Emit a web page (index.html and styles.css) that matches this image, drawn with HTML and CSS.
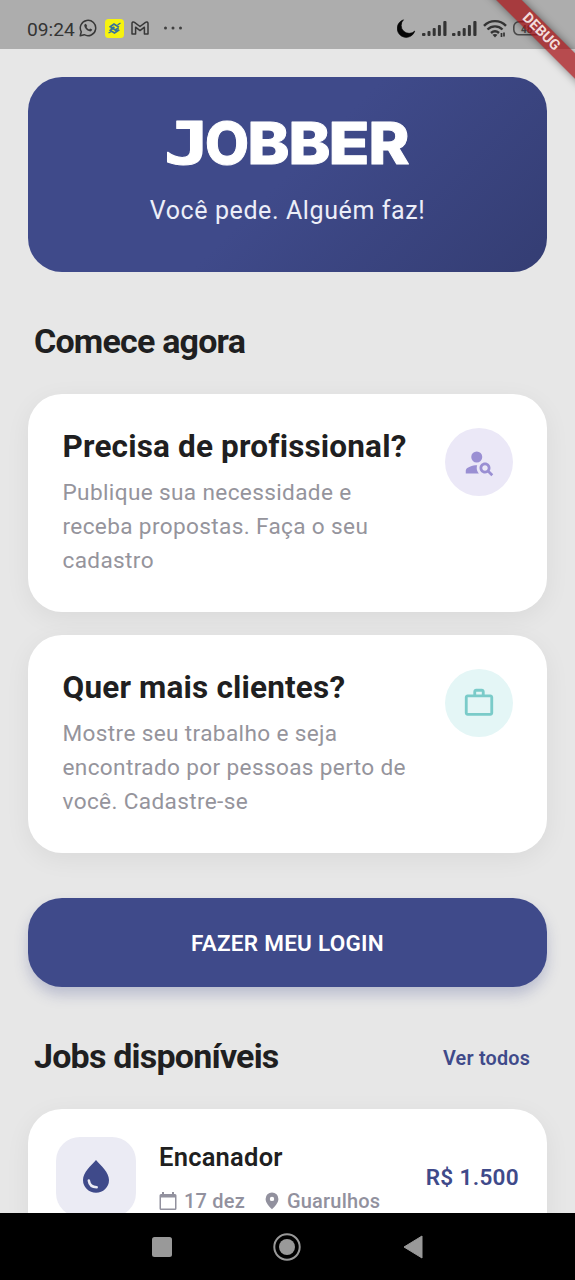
FILE: index.html
```
<!DOCTYPE html>
<html lang="pt-BR">
<head>
<meta charset="utf-8">
<title>Jobber</title>
<link rel="stylesheet" href="styles.css">
</head>
<body>
<div class="screen">
  <header class="status">
    <div class="status-left">
      <span class="clock">09:24</span>
      <svg class="i-wa" width="18" height="18" viewBox="0 0 18 18" fill="none" stroke="#383838" stroke-width="1.5"><path d="M1.2 16.8l1.1-4A7.7 7.7 0 1 1 5.2 15.700z" stroke-linejoin="round"/><path d="M5.700 5.200l1.200-.5 1.300 2.200-.7 1.200c.7 1.200 1.400 1.800 2.600 2.300l1-.9 2.100 1.100c-.2 1.500-1.500 2-2.700 1.700C7.700 11.500 5.400 8.900 5.200 6.500z" fill="#383838" stroke="none"/></svg>
      <svg class="i-bb" width="19" height="19" viewBox="0 0 19 19"><rect width="19" height="19" rx="3.500" fill="#f6f30f"/><g fill="none" stroke="#37709b" stroke-width="1.700"><path d="M4.500 8.200L9 5l5 3.200M4.500 11L9.500 14l4.800-3.200"/><path d="M6 8l6.500 4.500M5.500 10.800l4-2.600M9.500 11.500l4-2.500" stroke-width="2"/><path d="M3.500 14l3-1.500M12.500 6l3-2" stroke-width="1.300"/></g></svg>
      <svg class="i-gm" width="18" height="14" viewBox="0 0 18 14" fill="none" stroke="#383838" stroke-width="1.500" stroke-linejoin="round"><path d="M1 13V2.300C1 .9 2.500.6 3.500 1.300L9 5.500l5.500-4.200C15.500.6 17 .9 17 2.300V13h-3.600V6.200L9 9.600 4.600 6.200V13z"/></svg>
      <svg class="i-dots" width="20" height="4" viewBox="0 0 20 4" fill="#404040"><circle cx="2.500" cy="2" r="1.500"/><circle cx="10" cy="2" r="1.500"/><circle cx="17.500" cy="2" r="1.500"/></svg>
    </div>
    <div class="status-right">
      <svg width="19" height="19" viewBox="0 0 19 19"><path d="M6.500 .8A9 9 0 1 0 17.800 12 7.400 7.400 0 0 1 6.500 .8z" fill="#050505" stroke="#050505" stroke-width=".6" stroke-linejoin="round"/></svg>
      <svg class="i-sig" width="25" height="17" viewBox="0 0 25 17" fill="#343434"><rect y="13" width="3.500" height="3" rx="1"/><rect x="5.500" y="11" width="3" height="5" rx="1"/><rect x="10.700" y="8" width="3" height="8" rx="1"/><rect x="15.900" y="5" width="3" height="11" rx="1"/><rect x="21.300" y="1" width="3.200" height="15" rx="1"/></svg>
      <svg class="i-sig" width="25" height="17" viewBox="0 0 25 17" fill="#343434"><rect y="13" width="3.500" height="3" rx="1"/><rect x="5.500" y="11" width="3" height="5" rx="1"/><rect x="10.700" y="8" width="3" height="8" rx="1"/><rect x="15.900" y="5" width="3" height="11" rx="1"/><rect x="21.300" y="1" width="3.200" height="15" rx="1"/></svg>
      <svg class="i-wifi" width="24" height="19" viewBox="0 0 24 19" fill="none" stroke="#343434" stroke-width="2.400"><path d="M1 6.800c6-6.300 16-6.300 22 0M4.500 10.500c4.300-4.200 10.700-4.200 15 0M8 14c2.500-2.300 5.500-2.300 8 0"/><path d="M9.500 15.800l2.500 2.700 2.500-2.700c-1.500-1.200-3.500-1.200-5 0z" fill="#343434" stroke="none"/><path d="M18.500 18v-4M21 13.500v4" stroke-width="1.700"/></svg>
      <svg class="i-bat" width="34" height="15" viewBox="0 0 34 15"><rect x=".8" y=".8" width="28.500" height="13" rx="5" fill="none" stroke="#4b4b4b" stroke-width="1.600"/><path d="M31 5c1.500 1 1.500 3.500 0 4.500z" fill="#4b4b4b"/><text x="8" y="11.500" class="bat-text">48</text></svg>
    </div>
  </header>

  <main class="content">
    <section class="hero">
      <svg class="logo" width="244" height="50" viewBox="0 0 244 50" role="img" aria-label="JOBBER"><text y="45"><tspan class="logo-j" x="-2.500" textLength="47" lengthAdjust="spacingAndGlyphs">J</tspan><tspan x="39" textLength="44" lengthAdjust="spacingAndGlyphs">O</tspan><tspan x="81.500" textLength="42" lengthAdjust="spacingAndGlyphs">B</tspan><tspan x="122.500" textLength="42" lengthAdjust="spacingAndGlyphs">B</tspan><tspan x="162.500" textLength="41" lengthAdjust="spacingAndGlyphs">E</tspan><tspan x="202.500" textLength="41" lengthAdjust="spacingAndGlyphs">R</tspan></text></svg>
      <p class="tagline">Você pede. Alguém faz!</p>
    </section>

    <h2 class="heading start">Comece agora</h2>

    <section class="card option">
      <div class="option-text">
        <h3>Precisa de profissional?</h3>
        <p>Publique sua necessidade e<br>receba propostas. Faça o seu<br>cadastro</p>
      </div>
      <div class="bubble lilac"><svg width="33" height="33" viewBox="0 0 24 24" fill="#9a8fd3"><circle cx="10" cy="8" r="4"/><path d="M10.350 14.010C7.620 13.910 2 15.270 2 18v2h9.540c-2.470-2.760-1.230-5.890-1.190-5.990z"/><path d="M19.430 18.020c.36-.59.57-1.280.57-2.020 0-2.210-1.790-4-4-4s-4 1.790-4 4 1.790 4 4 4c.74 0 1.430-.22 2.020-.57L20.590 22 22 20.590l-2.570-2.570zM16 18c-1.100 0-2-.9-2-2s.9-2 2-2 2 .9 2 2-.9 2-2 2z"/></svg></div>
    </section>

    <section class="card option second">
      <div class="option-text">
        <h3>Quer mais clientes?</h3>
        <p>Mostre seu trabalho e seja<br>encontrado por pessoas perto de<br>você. Cadastre-se</p>
      </div>
      <div class="bubble mint"><svg width="34" height="34" viewBox="0 0 24 24" fill="#7acbc9"><path fill-rule="evenodd" d="M14 6V4h-4v2h4zM4 8v11h16V8H4zm16-2c1.110 0 2 .89 2 2v11c0 1.110-.89 2-2 2H4c-1.110 0-2-.89-2-2l.010-11c0-1.110.88-2 1.990-2h4V4c0-1.110.89-2 2-2h4c1.110 0 2 .89 2 2v2h4z"/></svg></div>
    </section>

    <button class="login">FAZER MEU LOGIN</button>

    <div class="jobs-head">
      <h2 class="heading">Jobs disponíveis</h2>
      <a class="all">Ver todos</a>
    </div>

    <section class="card job">
      <div class="tile"><svg width="34" height="40" viewBox="0 0 34 40"><path d="M17 3C12 8.500 4 15.500 4 23a13 12.700 0 0 0 26 0C30 15.500 22 8.500 17 3z" fill="#3f4a8a"/><path d="M9.800 23.500c.6 4.300 3.500 6.700 7.900 6.700" fill="none" stroke="#ebebf4" stroke-width="2.500" stroke-linecap="round"/></svg></div>
      <div class="job-info">
        <h4>Encanador</h4>
        <div class="meta">
          <svg width="18" height="20" viewBox="0 0 18 20" fill="#92919e"><path fill-rule="evenodd" d="M3 1h2v2h8V1h2v2h1a1.500 1.500 0 0 1 1.500 1.500v13A1.500 1.500 0 0 1 16 19H2A1.500 1.500 0 0 1 .5 17.500v-13A1.500 1.500 0 0 1 2 3h1zm-1 5.500v11h14V6.500z"/></svg>
          <span class="date">17 dez</span>
          <svg width="14" height="18" viewBox="0 0 14 18"><path fill="#92919e" fill-rule="evenodd" d="M7 .5a6.400 6.400 0 0 0-6.400 6.400C.6 11 4.500 14.500 7 17.200c2.500-2.700 6.400-6.200 6.400-10.300A6.400 6.400 0 0 0 7 .5zm0 4.200a2.200 2.200 0 1 1 0 4.400 2.200 2.200 0 0 1 0-4.400z"/></svg>
          <span class="city">Guarulhos</span>
        </div>
      </div>
      <strong class="price">R$ 1.500</strong>
    </section>
  </main>

  <nav class="nav">
    <svg width="22" height="22" viewBox="0 0 22 22"><rect x="1" y="1" width="20" height="20" rx="2.500" fill="#999"/></svg>
    <svg width="28" height="28" viewBox="0 0 28 28"><circle cx="14" cy="14" r="12.700" fill="none" stroke="#999" stroke-width="2"/><circle cx="14" cy="14" r="8" fill="#999"/></svg>
    <svg width="22" height="26" viewBox="0 0 22 26"><path d="M20 2v22L2 13z" fill="#999" stroke="#999" stroke-linejoin="round"/></svg>
  </nav>

  <div class="banner-box"><div class="banner">DEBUG</div></div>
</div>
</body>
</html>
```
FILE: styles.css
```
* { box-sizing: border-box; }
body { margin: 0; font-family: Roboto, "Liberation Sans", sans-serif; background: #e7e7e7; }
h2, h3, h4, p { margin: 0; }
svg { display: block; flex: none; }
.screen { position: relative; width: 575px; height: 1280px; overflow: hidden; display: flex; flex-direction: column; background: #e7e7e7; }
.status { flex: none; height: 49px; padding: 7px 27px 0; display: flex; justify-content: space-between; background: #adadad; }
.status-left, .status-right { display: flex; align-items: center; height: 42px; white-space: nowrap; }
.clock { width: 52px; padding-top: 2px; font-size: 19.2px; color: #343434; }
.i-bb { margin-left: 8px; }
.i-gm { margin-left: 7px; }
.i-dots { margin-left: 14px; }
.status-right { margin-right: 1px; gap: 6px; }
.i-sig + .i-sig { margin-left: -1px; }
.bat-text { font: 700 10px Roboto, sans-serif; fill: #4b4b4b; }

.content { flex: 1; min-height: 0; overflow: hidden; padding: 28px 28px 0; display: flex; flex-direction: column; }
.content > * { flex: none; }
.hero { height: 195px; border-radius: 34px; background: linear-gradient(135deg, #3f4a8a 0%, #3f4a8a 50%, #343d73 100%); display: flex; flex-direction: column; align-items: center; padding-top: 42px; }
.logo { overflow: visible; }
.logo text { font: 800 58px Inter, sans-serif; fill: #fff; stroke: #fff; stroke-width: 1; stroke-linejoin: round; }
.logo .logo-j { font-family: "DejaVu Sans Mono", monospace; font-weight: 700; }
.tagline { margin-top: 24px; font-size: 25px; line-height: 36px; letter-spacing: .6px; color: #eceef8; }
.heading { font-size: 34px; line-height: 44px; font-weight: 700; letter-spacing: -.8px; color: #1f1f21; }
.start { margin: 47px 0 31px 6px; }
.card { background: #fff; border-radius: 34px; box-shadow: 0 6px 26px rgba(0, 0, 0, .06); }
.option { height: 218px; padding: 34px 34px 0 34.500px; display: flex; justify-content: space-between; }
.second { margin-top: 23px; }
.option-text { white-space: nowrap; }
.option h3 { font-size: 31.500px; line-height: 38px; font-weight: 700; letter-spacing: .17px; color: #1f1f21; }
.option p { margin-top: 10px; font-size: 22.6px; line-height: 34px; letter-spacing: .36px; color: #95949c; }
.bubble { width: 68px; height: 68px; border-radius: 50%; display: grid; place-items: center; }
.lilac { background: #ebe8f7; }
.mint { background: #e4f6f6; }
.login { margin-top: 45px; height: 89px; padding-top: 1px; border: 0; border-radius: 34px; background: #3f4a8a; color: #fff; font: 600 22.500px Roboto, sans-serif; letter-spacing: .25px; box-shadow: 0 8px 14px rgba(63, 74, 138, .26); }
.jobs-head { margin: 47px 17px 0 6px; height: 44px; display: flex; justify-content: space-between; align-items: center; }
.all { margin-top: 4px; font-size: 19.8px; font-weight: 600; letter-spacing: .2px; color: #3f4a8a; }
.job { margin-top: 31px; height: 140px; padding: 28px 28px 0; display: flex; }
.tile { width: 80px; height: 80px; border-radius: 24px; background: #ebebf4; display: grid; place-items: center; }
.job-info { margin-left: 23px; white-space: nowrap; }
.job h4 { font-size: 25.500px; line-height: 40px; font-weight: 600; letter-spacing: .25px; color: #1f1f21; }
.meta { margin-top: 11px; display: flex; align-items: center; font-size: 20px; line-height: 26px; font-weight: 500; color: #92919e; }
.date { margin: 0 20px 0 7px; letter-spacing: .2px; }
.city { margin-left: 8px; letter-spacing: .2px; }
.price { margin: 26px 0 0 auto; font-size: 22.6px; line-height: 30px; letter-spacing: .3px; font-weight: 600; color: #3f4a8a; }
.nav { flex: none; height: 67px; padding-right: 1px; background: #000; display: flex; justify-content: center; align-items: center; gap: 100.500px; }
.banner-box { position: absolute; right: 0; top: 0; width: 110px; height: 110px; overflow: hidden; }
.banner { position: absolute; right: -40px; top: 22px; width: 150px; height: 18px; padding-left: 3px; transform: rotate(45deg); background: rgba(165, 15, 20, .72); color: #f3dcdc; font-size: 14.500px; line-height: 18px; font-weight: 700; text-align: center; box-shadow: 0 0 9px rgba(0, 0, 0, .45); }
```
